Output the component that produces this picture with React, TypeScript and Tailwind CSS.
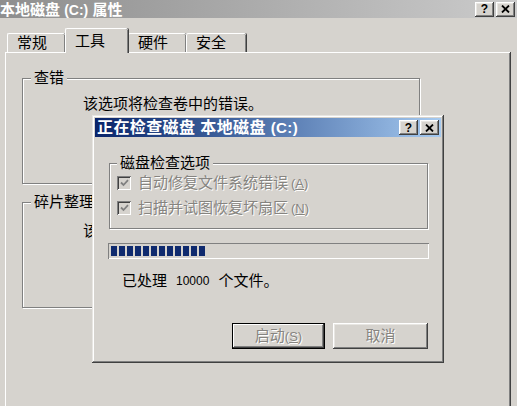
import React from "react"

const raised =
  "shadow-[inset_-1px_-1px_#404040,inset_1px_1px_#ffffff,inset_-2px_-2px_#808080,inset_2px_2px_#e8e6e2]"
const windowFrame =
  "shadow-[inset_-1px_-1px_#404040,inset_1px_1px_#e8e6e2,inset_-2px_-2px_#808080,inset_2px_2px_#ffffff]"

function CloseGlyph() {
  return (
    <svg width="9" height="8" viewBox="0 0 9 8">
      <path d="M1 0.5 L8 7.5 M8 0.5 L1 7.5" stroke="#000" strokeWidth="1.8" fill="none" />
    </svg>
  )
}

function CaptionButtons() {
  return (
    <div className="flex gap-[2px]">
      <div className={`w-[19px] h-[15px] bg-[#d6d3ce] flex items-center justify-center text-[12px] font-bold leading-none text-black ${raised}`}>
        ?
      </div>
      <div className={`w-[19px] h-[15px] bg-[#d6d3ce] flex items-center justify-center ${raised}`}>
        <CloseGlyph />
      </div>
    </div>
  )
}

function Tab({ label, active, w }: { label: string; active?: boolean; w: string }) {
  return (
    <div
      className={`${w} ${
        active ? "h-[25px] -mb-px z-10 bg-[#d6d3ce]" : "h-[19px]"
      } relative flex items-center pl-[9px] border-t border-l border-white rounded-t-[2px] shadow-[inset_-1px_0_#808080,1px_0_#404040] text-black`}
    >
      {label}
    </div>
  )
}

function Disabled({ children }: { children: React.ReactNode }) {
  return <span className="text-[#868480] [text-shadow:1px_1px_0_#ffffff]">{children}</span>
}

function CheckRow({ label, key1 }: { label: string; key1: string }) {
  return (
    <div className="flex items-center h-[16px] gap-[7px]">
      <div className="w-[14px] h-[14px] bg-[#d6d3ce] flex items-center justify-center shadow-[inset_1px_1px_#808080,inset_-1px_-1px_#ffffff,inset_2px_2px_#404040,inset_-2px_-2px_#d6d3ce]">
        <svg width="9" height="8" viewBox="0 0 9 8">
          <path d="M1 3.5 L3.5 6 L8 1.2" stroke="#808080" strokeWidth="1.8" fill="none" />
        </svg>
      </div>
      <Disabled>
        {label}
        <span className="ml-[3px] text-[13px]">
          (<span className="underline">{key1}</span>)
        </span>
      </Disabled>
    </div>
  )
}

function CheckDiskDialog() {
  const blocks = Array.from({ length: 12 })
  return (
    <div className={`absolute left-[92px] top-[115px] w-[352px] h-[248px] bg-[#d6d3ce] p-[3px] flex flex-col ${windowFrame}`}>
      <div className="h-[19px] flex items-center justify-between pl-[2px] pr-[2px] bg-gradient-to-r from-[#0a246a] to-[#a6caf0]">
        <span className="text-white font-bold text-[16px] leading-none tracking-[0.4px]">
          正在检查磁盘 本地磁盘 <span className="text-[15px]">(C:)</span>
        </span>
        <CaptionButtons />
      </div>

      <fieldset className="ml-[14px] mt-[17px] w-[319px] h-[75px] border border-[#808080] shadow-[inset_1px_1px_0_#ffffff,1px_1px_0_#ffffff]">
        <legend className="ml-[7px] px-[3px] leading-[18px] bg-[#d6d3ce] text-black">磁盘检查选项</legend>
        <div className="flex flex-col gap-[9px] pl-[7px] pt-[3px]">
          <CheckRow label="自动修复文件系统错误" key1="A" />
          <CheckRow label="扫描并试图恢复坏扇区" key1="N" />
        </div>
      </fieldset>

      <div className="ml-[13px] mt-[14px] w-[321px] h-[16px] flex items-center gap-[2px] pl-[3px] shadow-[inset_1px_1px_#808080,inset_-1px_-1px_#ffffff]">
        {blocks.map((_, i) => (
          <div key={i} className="w-[6px] h-[10px] bg-[#0f2a6e]" />
        ))}
      </div>

      <div className="ml-[27px] mt-[12px] h-[20px] flex items-center text-black">
        <span>已处理</span>
        <span className="ml-[9px] text-[12px]">10000</span>
        <span className="ml-[9px]">个文件。</span>
      </div>

      <div className="mt-auto mb-[11px] mr-[13px] flex justify-end gap-[8px]">
        <div className="w-[93px] h-[26px] bg-[#d6d3ce] border border-black flex items-center justify-center shadow-[inset_-1px_-1px_#404040,inset_1px_1px_#ffffff,inset_-2px_-2px_#808080]">
          <Disabled>
            启动<span className="text-[13px]">(<span className="underline">S</span>)</span>
          </Disabled>
        </div>
        <div className={`w-[95px] h-[26px] bg-[#d6d3ce] flex items-center justify-center ${raised}`}>
          <Disabled>取消</Disabled>
        </div>
      </div>
    </div>
  )
}

export default function App() {
  return (
    <div className="relative w-[517px] h-[406px] overflow-hidden bg-[#d6d3ce] font-['Liberation_Sans','Noto_Sans_CJK_SC',sans-serif] text-[15px]">
      <div className="h-[18px] flex items-center justify-between pr-[2px] bg-gradient-to-r from-[#8e8e8e] to-[#cbcbcb]">
        <span className="text-white font-bold text-[15px] leading-none">
          本地磁盘 <span className="text-[14px]">(C:)</span> 属性
        </span>
        <CaptionButtons />
      </div>

      <div className="pl-[5px] pr-[7px] pt-[10px]">
        <div className="flex items-end pl-[2px]">
          <Tab label="常规" w="w-[58px]" />
          <Tab label="工具" w="w-[63px]" active />
          <Tab label="硬件" w="w-[58px]" />
          <Tab label="安全" w="w-[60px]" />
        </div>
        <div className="h-[400px] border-t border-l border-white shadow-[inset_-1px_0_#808080,1px_0_#404040] pt-[16px] pl-[16px]">
          <fieldset className="w-[398px] h-[115px] border border-[#808080] shadow-[inset_1px_1px_0_#ffffff,1px_1px_0_#ffffff]">
            <legend className="ml-[8px] px-[3px] leading-[18px] bg-[#d6d3ce] text-black">查错</legend>
            <div className="pl-[60px] pt-[6px] text-black">该选项将检查卷中的错误。</div>
          </fieldset>
          <fieldset className="mt-[9px] w-[398px] h-[115px] border border-[#808080] shadow-[inset_1px_1px_0_#ffffff,1px_1px_0_#ffffff]">
            <legend className="ml-[8px] px-[3px] leading-[18px] bg-[#d6d3ce] text-black">碎片整理</legend>
            <div className="pl-[60px] pt-[9px] text-black">该选项将对卷中的文件进行碎片整理。</div>
          </fieldset>
        </div>
      </div>

      <CheckDiskDialog />
    </div>
  )
}
